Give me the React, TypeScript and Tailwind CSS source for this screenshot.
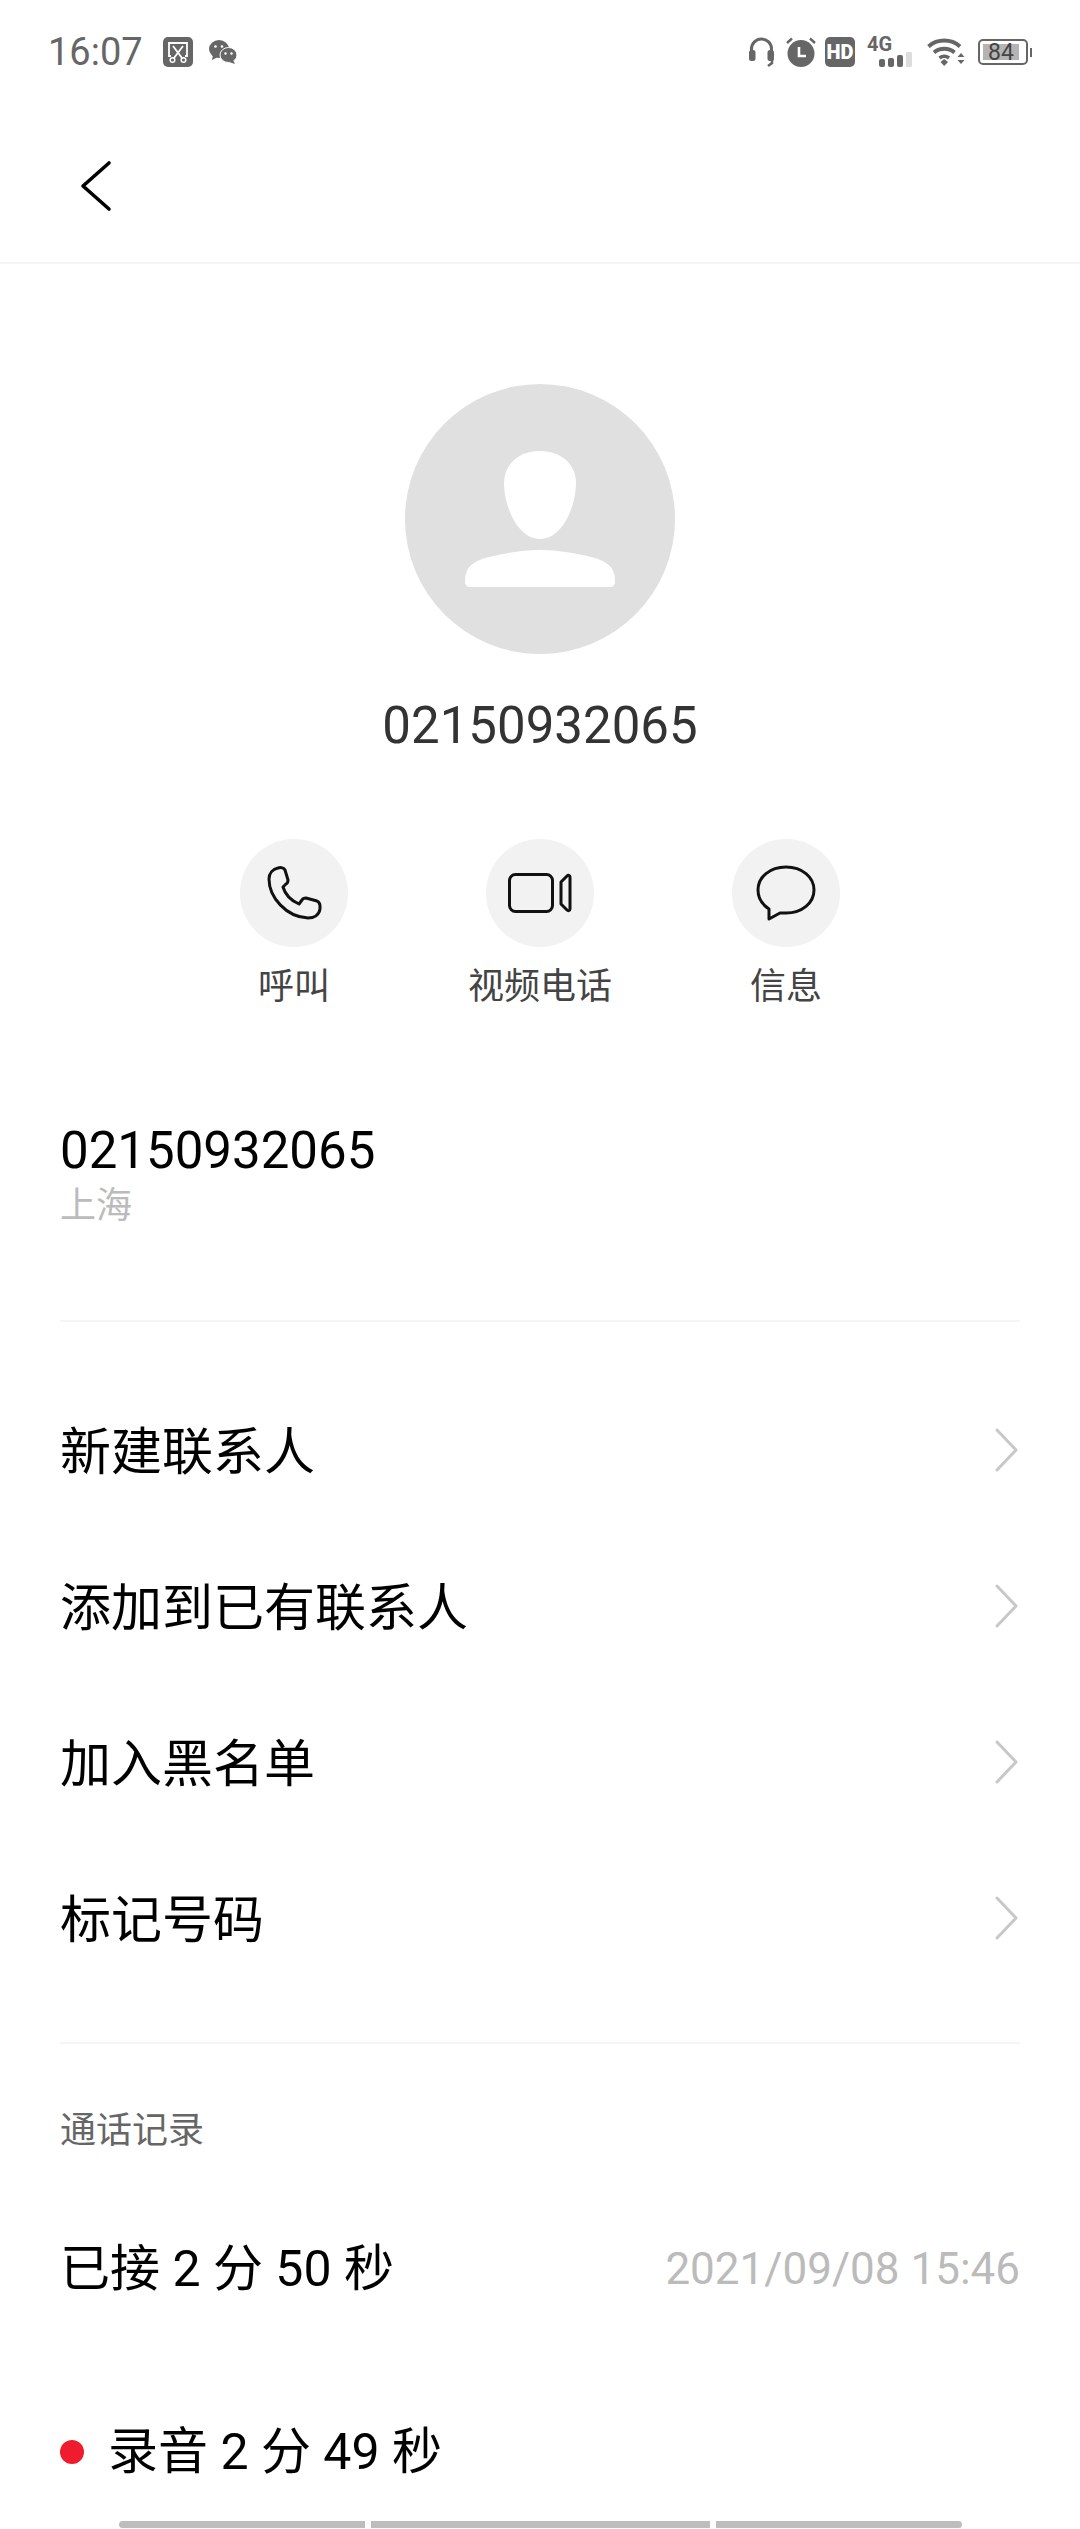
const FONT = "font-['Roboto','Noto_Sans_CJK_SC',sans-serif]";

const StatusLeft = () => (
  <div className="flex items-center">
    <span className="text-[38px] leading-none text-[#666]">16:07</span>
    <svg className="ml-[20px]" width="30" height="30" viewBox="0 0 30 30" fill="none">
      <rect width="30" height="30" rx="5" fill="#666" />
      <path d="M8 19 H6 V6 H24 V19 H22" stroke="#fff" strokeWidth="1.8" />
      <path d="M10 9 L19 21 M20 9 L11 21" stroke="#fff" strokeWidth="1.8" />
      <circle cx="9.5" cy="23" r="2.3" stroke="#fff" strokeWidth="1.5" />
      <circle cx="20.5" cy="23" r="2.3" stroke="#fff" strokeWidth="1.5" />
    </svg>
    <svg className="ml-[16px]" width="28" height="24" viewBox="0 0 28 24">
      <ellipse cx="10" cy="9" rx="10" ry="9" fill="#666" />
      <path d="M4 15 L3 20 L9 17 Z" fill="#666" />
      <ellipse cx="19.5" cy="15" rx="8.5" ry="7.5" fill="#666" stroke="#fff" strokeWidth="1" />
      <path d="M24 20 L26 24 L20 22 Z" fill="#666" />
      <circle cx="6.5" cy="6.5" r="1.3" fill="#fff" />
      <circle cx="13" cy="6.5" r="1.3" fill="#fff" />
      <circle cx="16.5" cy="13.5" r="1.2" fill="#fff" />
      <circle cx="22.5" cy="13.5" r="1.2" fill="#fff" />
    </svg>
  </div>
);

const StatusRight = () => (
  <div className="flex items-center">
    <svg width="25" height="30" viewBox="0 0 25 30" fill="none">
      <path d="M2.5 17 V12 A10 10 0 0 1 22.5 12 V17" stroke="#666" strokeWidth="3" />
      <rect x="0" y="13" width="6.5" height="11" rx="2.5" fill="#666" />
      <rect x="18.5" y="13" width="6.5" height="11" rx="2.5" fill="#666" />
      <path d="M23 23 V26 L19 29" stroke="#666" strokeWidth="2.5" />
    </svg>
    <svg className="ml-[12px]" width="30" height="30" viewBox="0 0 30 30" fill="none">
      <circle cx="15" cy="16.5" r="13.5" fill="#666" />
      <path d="M13 10 V19 H20" stroke="#fff" strokeWidth="2.6" />
      <path d="M1 6 L6 1.5 M29 6 L24 1.5" stroke="#666" strokeWidth="2.4" />
    </svg>
    <div className="ml-[9px] flex h-[30px] w-[30px] items-center justify-center rounded-[5px] bg-[#666] text-[20px] font-black leading-none text-white">
      HD
    </div>
    <div className="ml-[12px] flex h-[30px] w-[46px] flex-col">
      <span className="h-[15px] text-[20px] font-bold leading-[15px] text-[#666]">4G</span>
      <div className="flex h-[15px] items-end gap-[3px] pl-[12px]">
        <span className="h-[8px] w-[6px] rounded-[2px] bg-[#666]" />
        <span className="h-[9px] w-[6px] rounded-[2px] bg-[#666]" />
        <span className="h-[12px] w-[6px] rounded-[2px] bg-[#666]" />
        <span className="h-[15px] w-[6px] rounded-[1px] bg-[#ddd]" />
      </div>
    </div>
    <svg className="ml-[14px]" width="38" height="28" viewBox="0 0 38 28" fill="none">
      <path d="M1.5 8.5 A24 24 0 0 1 33 8.5" stroke="#666" strokeWidth="4" />
      <path d="M7 14.5 A16 16 0 0 1 27.5 14.5" stroke="#666" strokeWidth="4" />
      <path d="M12.5 20 A8 8 0 0 1 22 20" stroke="#666" strokeWidth="3.6" />
      <path d="M13.5 24 L17.2 21 L21 24 L17.2 28 Z" fill="#666" />
      <path d="M30.5 19 L34 15 L37.5 19 Z M30.5 22 L37.5 22 L34 26 Z" fill="#666" />
    </svg>
    <div className="ml-[13px] flex items-center">
      <div className="flex h-[26px] w-[50px] items-center rounded-[5px] border-[2px] border-[#666] p-[3px]">
        <div className="flex h-full w-[36px] items-center justify-center bg-[#b4b4b4] text-[23px] leading-none text-[#444]">
          84
        </div>
      </div>
      <span className="ml-[2px] h-[9px] w-[2px] bg-[#666]" />
    </div>
  </div>
);

const PhoneIcon = () => (
  <svg width="56" height="56" viewBox="0 0 56 56" fill="none">
    <path
      d="M12 3 C7 4 3 8 3 14 C3 32 20 52 42 53 C48 53 53 50 54 44 L54 41 C54 38 53 37 51 36 L40 33 C38 33 37 33 36 35 L33 39 C24 35 19 29 17 22 L20 19 C22 18 22 16 22 15 L19 5 C18 3 15 2 12 3 Z"
      stroke="#111"
      strokeWidth="3"
      strokeLinejoin="round"
    />
  </svg>
);

const VideoIcon = () => (
  <svg width="64" height="40" viewBox="0 0 64 40" fill="none">
    <rect x="1.5" y="1.5" width="43" height="37" rx="6" stroke="#111" strokeWidth="3" />
    <path d="M62 4 V36 C62 38 60 38 59 37 L53 31 V9 L59 3 C60 2 62 2 62 4 Z" stroke="#111" strokeWidth="3" strokeLinejoin="round" />
  </svg>
);

const MessageIcon = () => (
  <svg width="60" height="56" viewBox="0 0 60 56" fill="none">
    <path
      d="M30 2 C14 2 2 12 2 25 C2 33 7 40 13 44 L13 54 L24 48 C26 48 28 48 30 48 C46 48 58 38 58 25 C58 12 46 2 30 2 Z"
      stroke="#111"
      strokeWidth="3"
      strokeLinejoin="round"
    />
  </svg>
);

const Action = ({ icon, label }: { icon: React.ReactNode; label: string }) => (
  <div className="flex w-[246px] flex-col items-center">
    <div className="flex h-[108px] w-[108px] items-center justify-center rounded-full bg-[#f2f2f2]">{icon}</div>
    <span className="mt-[21px] text-[36px] leading-[38px] text-[#444]">{label}</span>
  </div>
);

const Row = ({ label }: { label: string }) => (
  <div className="flex h-[156px] items-center justify-between pr-[1px]">
    <span className="text-[51px] leading-none text-black">{label}</span>
    <svg className="-mt-[4px]" width="24" height="44" viewBox="0 0 24 44" fill="none">
      <path d="M2 2 L21 22 L2 42" stroke="#c8c8c8" strokeWidth="3" strokeLinecap="round" strokeLinejoin="round" />
    </svg>
  </div>
);

export default function App() {
  return (
    <div className={`${FONT} h-[2529px] w-[1080px] overflow-hidden bg-white`}>
      <div className="flex h-[104px] items-center justify-between pl-[48px] pr-[48px]">
        <StatusLeft />
        <StatusRight />
      </div>

      <div className="flex h-[160px] items-center border-b-2 border-[#f5f5f5] pl-[80px] pt-[6px]">
        <svg width="32" height="52" viewBox="0 0 32 52" fill="none">
          <path d="M29 3 L3 26 L29 49" stroke="#000" strokeWidth="3.6" strokeLinecap="round" strokeLinejoin="round" />
        </svg>
      </div>

      <div className="flex flex-col items-center pt-[120px]">
        <div className="flex h-[270px] w-[270px] items-center justify-center rounded-full bg-[#e0e0e0]">
          <svg width="150" height="136" viewBox="0 0 150 136">
            <path d="M75 0 C97 0 111 14 111 32 C111 56 97 88 75 88 C53 88 39 56 39 32 C39 14 53 0 75 0 Z" fill="#fff" />
            <path d="M0 130 C0 116 8 110 24 106 C40 102 58 99 75 99 C92 99 110 102 126 106 C142 110 150 116 150 130 C150 134 148 136 145 136 L5 136 C2 136 0 134 0 130 Z" fill="#fff" />
          </svg>
        </div>
        <span className="mt-[42px] text-[51px] leading-[60px] text-[#333]">02150932065</span>
      </div>

      <div className="mt-[83px] flex justify-center">
        <Action icon={<PhoneIcon />} label="呼叫" />
        <Action icon={<VideoIcon />} label="视频电话" />
        <Action icon={<MessageIcon />} label="信息" />
      </div>

      <div className="px-[60px]">
        <div className="mt-[115px] border-b-2 border-[#f5f5f5] pb-[94px]">
          <div className="text-[51px] leading-[60px] text-black">02150932065</div>
          <div className="mt-[5px] text-[36px] leading-[40px] text-[#bbb]">上海</div>
        </div>

        <div className="mt-[52px] border-b-2 border-[#f5f5f5] pb-[44px]">
          <Row label="新建联系人" />
          <Row label="添加到已有联系人" />
          <Row label="加入黑名单" />
          <Row label="标记号码" />
        </div>

        <div className="mt-[67px] text-[36px] leading-[40px] text-[#666]">通话记录</div>

        <div className="mt-[88px] flex items-center justify-between">
          <span className="whitespace-pre text-[50px] leading-[60px] text-black">已接 2 分 50 秒</span>
          <span className="text-[44px] leading-[60px] text-[#bbb]">2021/09/08 15:46</span>
        </div>

        <div className="mt-[123px] flex items-center">
          <span className="h-[24px] w-[24px] rounded-full bg-[#ee1c2e]" />
          <span className="ml-[24px] whitespace-pre text-[50px] leading-[60px] text-black">录音 2 分 49 秒</span>
        </div>
      </div>

      <div className="mt-[39px] flex justify-center gap-[6px]">
        <span className="h-[7px] w-[246px] rounded-l-full bg-[#bdbdbd]" />
        <span className="h-[7px] w-[339px] bg-[#bdbdbd]" />
        <span className="h-[7px] w-[246px] rounded-r-full bg-[#bdbdbd]" />
      </div>
    </div>
  );
}
